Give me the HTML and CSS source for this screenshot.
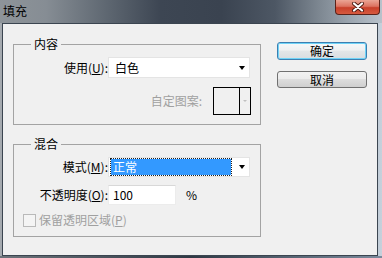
FILE: index.html
```html
<!DOCTYPE html>
<html lang="zh-CN">
<head>
<meta charset="utf-8">
<title>填充</title>
<link rel="stylesheet" href="styles.css">
</head>
<body>
<div class="window">
  <div class="titlebar">
    <span class="title">填充</span>
    <div class="close">
      <svg width="14" height="10" viewBox="0 0 14 10">
        <path d="M3 1.5 L11 8.5 M11 1.5 L3 8.5" stroke="#4a1a12" stroke-width="4" stroke-linecap="round"/>
        <path d="M3 1.5 L11 8.5 M11 1.5 L3 8.5" stroke="#ffffff" stroke-width="2.2" stroke-linecap="round"/>
      </svg>
    </div>
  </div>
  <div class="client">
    <div class="groups">
      <fieldset class="group group-content">
        <legend>内容</legend>
        <div class="row">
          <span class="label">使用(<u>U</u>):</span>
          <div class="select">
            <span class="select-text">白色</span>
            <span class="arrow"></span>
          </div>
        </div>
        <div class="row-pattern">
          <span class="label disabled">自定图案:</span>
          <div class="pattern">
            <span class="pattern-swatch"></span>
            <span class="pattern-btn"><span class="arrow arrow-gray"></span></span>
          </div>
        </div>
      </fieldset>
      <fieldset class="group group-blend">
        <legend>混合</legend>
        <div class="row">
          <span class="label">模式(<u>M</u>):</span>
          <div class="select select-focus">
            <span class="select-sel">正常</span>
            <span class="arrow"></span>
          </div>
        </div>
        <div class="row">
          <span class="label">不透明度(<u>O</u>):</span>
          <div class="opacity">
            <div class="input">100</div>
            <span class="pct">%</span>
          </div>
        </div>
        <div class="row-check">
          <span class="checkbox"></span>
          <span class="disabled">保留透明区域(<u>P</u>)</span>
        </div>
      </fieldset>
    </div>
    <div class="buttons">
      <div class="btn btn-default">确定</div>
      <div class="btn">取消</div>
    </div>
  </div>
</div>
</body>
</html>
```
FILE: styles.css
```css
html, body {
  margin: 0;
  padding: 0;
}
body {
  width: 382px;
  height: 258px;
  overflow: hidden;
  font-family: "Noto Sans CJK SC", "Noto Sans", sans-serif;
  font-size: 12px;
  color: #000;
}
.window {
  width: 382px;
  height: 258px;
  box-sizing: border-box;
  padding: 0 4px 2px 2px;
  display: flex;
  flex-direction: column;
  background: linear-gradient(to right, #a6abb0 0%, #9ba1a7 2%, #5a6470 40%, #6f7a86 80%, #c6d1dc 100%);
  position: relative;
}
.window::after {
  content: "";
  position: absolute;
  left: 0;
  right: 0;
  bottom: 0;
  height: 2px;
  background: linear-gradient(to right, #6c737a, #2f3944 50%, #7a8a9c);
}
.titlebar {
  height: 23px;
  margin: 0 -4px 0 -2px;
  display: flex;
  align-items: flex-start;
  justify-content: space-between;
  background: linear-gradient(to right, #8e9499 0%, #868d94 12%, #5e6771 28%, #3d4653 42%, #3a4350 58%, #4d5764 72%, #7f8993 84%, #9da7b1 92%, #b8c2cb 100%);
}
.title {
  padding: 4px 0 0 3px;
  line-height: 13px;
  font-size: 12px;
  color: #000;
}
.close {
  width: 45px;
  height: 15px;
  margin-right: 2px;
  box-sizing: border-box;
  border: 1px solid #5b2219;
  border-top: none;
  border-radius: 0 0 4px 4px;
  background: linear-gradient(to bottom, #eba595 0%, #dc7360 45%, #c8402a 55%, #d65a3f 100%);
  display: flex;
  align-items: center;
  justify-content: center;
}
.client {
  flex: 1;
  border: 1px solid #3b4550;
  background: #f0f0f0;
  display: flex;
  align-items: flex-start;
  padding: 13px 0 0 10px;
}
.groups {
  width: 248px;
  display: flex;
  flex-direction: column;
  gap: 12px;
}
.group {
  margin: 0;
  padding: 0 9px 0 0;
  border: 1px solid #a3a3a3;
  min-width: 0;
}
.group legend {
  margin-left: 17px;
  padding: 0 3px;
  line-height: 14px;
  font-size: 12px;
}
.group-content {
  padding-bottom: 9px;
}
.group-blend {
  padding-bottom: 9px;
}
.row {
  display: grid;
  grid-template-columns: 94px 142px;
  align-items: center;
  margin-top: 6px;
}
.group-blend .row + .row {
  margin-top: 8px;
}
.label {
  text-align: right;
  line-height: 14px;
  white-space: nowrap;
}
.disabled {
  color: #a0a0a0;
}
.select {
  height: 21px;
  box-sizing: border-box;
  border: 1px solid #e4e4e4;
  background: #fff;
  display: flex;
  align-items: center;
  position: relative;
}
.select-text {
  padding-left: 6px;
  line-height: 14px;
}
.arrow {
  width: 0;
  height: 0;
  border-left: 3.5px solid transparent;
  border-right: 3.5px solid transparent;
  border-top: 4px solid #000;
  margin-left: auto;
  margin-right: 4px;
}
.arrow-gray {
  border-left-width: 2px;
  border-right-width: 2px;
  border-top: 2px solid #c0c0c0;
  margin: 0;
}
.select-focus {
  height: 20px;
}
.select-sel {
  width: 120px;
  height: 16px;
  margin-left: 2px;
  box-sizing: border-box;
  background: #3399ff;
  color: #fff;
  outline: 1px dotted #202020;
  outline-offset: 0;
  line-height: 15px;
  padding-left: 2px;
}
.row-pattern {
  display: flex;
  justify-content: flex-end;
  align-items: center;
  gap: 11px;
  margin-top: 9px;
}
.pattern {
  width: 38px;
  height: 28px;
  box-sizing: border-box;
  border: 1px solid #000;
  display: flex;
  background: #f0f0f0;
}
.pattern-swatch {
  width: 25px;
  border-right: 1px solid #000;
}
.pattern-btn {
  flex: 1;
  display: flex;
  align-items: center;
  justify-content: center;
}
.opacity {
  display: flex;
  align-items: center;
}
.input {
  width: 68px;
  height: 20px;
  box-sizing: border-box;
  border: 1px solid #ececec;
  border-top-color: #d8d8d8;
  background: #fff;
  padding-left: 4px;
  line-height: 18px;
}
.pct {
  margin-left: 10px;
  line-height: 14px;
}
.row-check {
  display: flex;
  align-items: center;
  gap: 3px;
  padding-left: 9px;
  margin-top: 8px;
  line-height: 14px;
}
.checkbox {
  width: 13px;
  height: 13px;
  box-sizing: border-box;
  border: 1px solid #b9b9b9;
  background: #f4f4f4;
}
.buttons {
  margin-left: 16px;
  padding-top: 5px;
  display: flex;
  flex-direction: column;
  gap: 11px;
}
.btn {
  width: 90px;
  height: 17px;
  box-sizing: border-box;
  border: 1px solid #707070;
  border-radius: 3px;
  background: linear-gradient(to bottom, #f2f2f2 0%, #ebebeb 45%, #dddddd 50%, #cfcfcf 100%);
  text-align: center;
  line-height: 15px;
  font-size: 12px;
}
.btn-default {
  height: 18px;
  line-height: 16px;
  border-color: #3c7fb1;
  box-shadow: inset 0 0 0 1px #6fd3f7;
  background: linear-gradient(to bottom, #f6f8f9 0%, #eef0f1 45%, #e2e6e8 50%, #d8dde0 100%);
}
```
